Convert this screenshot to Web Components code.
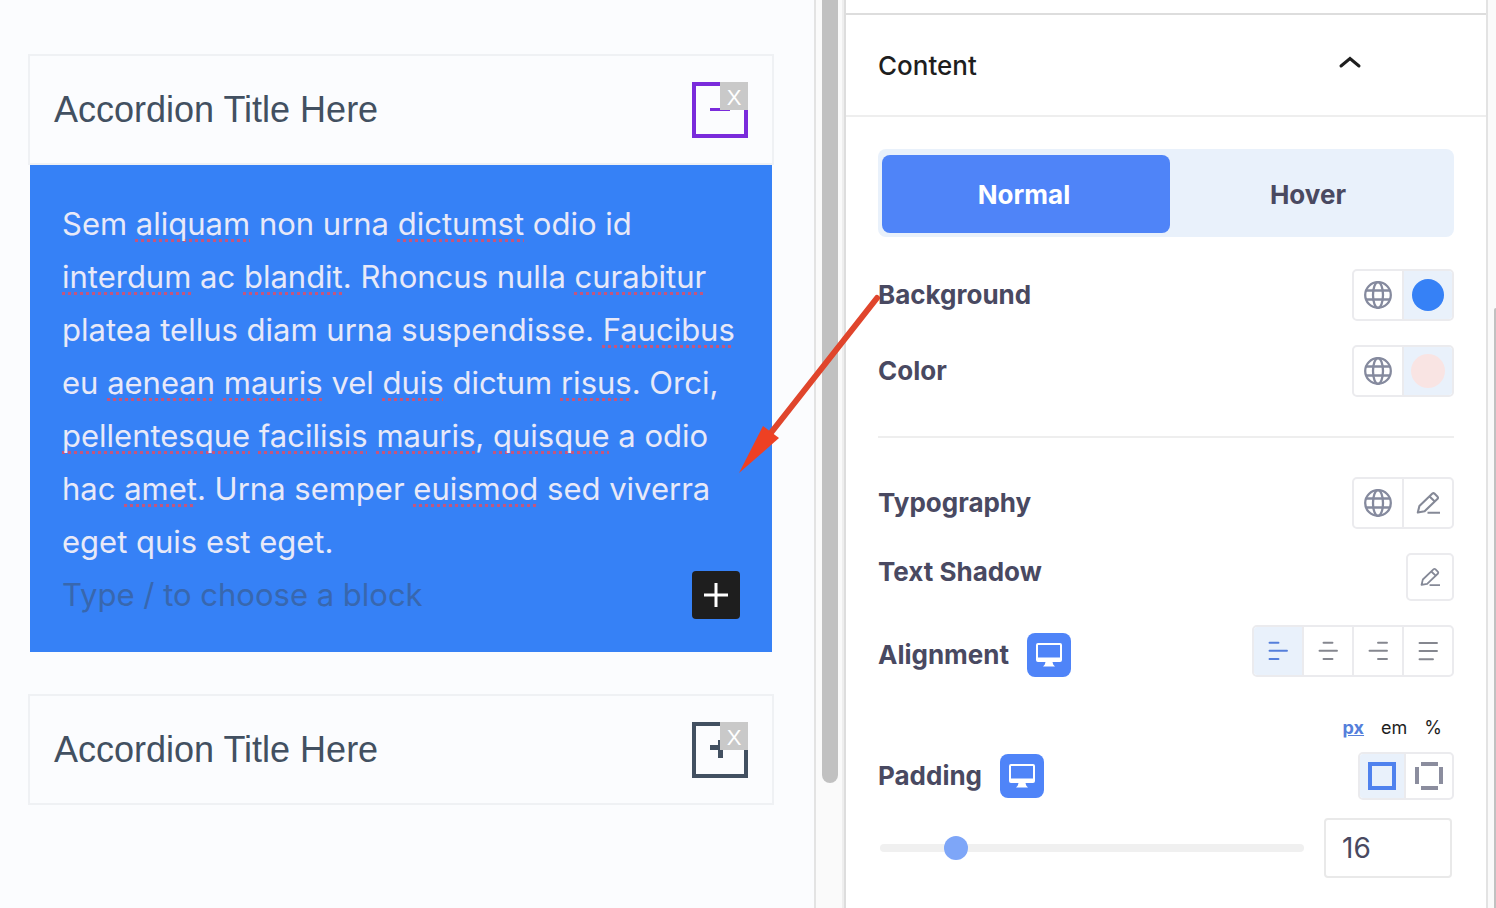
<!DOCTYPE html>
<html lang="en">
<head>
<meta charset="utf-8">
<title>Accordion block settings</title>
<style>
	body { margin: 0; background: #fbfcfe; font-family: Inter, "Liberation Sans", sans-serif; }
	.workspace { display: flex; min-height: 100vh; }
	.workspace editor-canvas { flex: 1; min-width: 0; }
</style>
</head>
<body>
<div class="workspace">
	<editor-canvas>
		<accordion-item heading="Accordion Title Here" open>
			<accordion-text></accordion-text>
		</accordion-item>
		<accordion-item heading="Accordion Title Here"></accordion-item>
	</editor-canvas>
	<scroll-rail></scroll-rail>
	<settings-panel></settings-panel>
</div>
<script>
const icons = {
	globe: [28, 28, `<g fill="none" stroke="#858a9e" stroke-width="2.3"><circle cx="14" cy="14" r="12.8"/><ellipse cx="14" cy="14" rx="5" ry="12.8"/><path d="M2 9.5H26M2 18.5H26"/></g>`],
	pencil: [24, 24, `<g fill="none" stroke="#858997" stroke-width="2.1"><path d="M1.8 21.5L3.4 15L16.4 2.6Q17.4 1.8 18.4 2.6L21.6 5.8Q22.4 6.8 21.6 7.8L8.6 20.2Z" stroke-linejoin="round"/><path d="M13.6 5.4L18.8 10.4M11.5 21.8H24"/></g>`],
	monitor: [26, 24, `<path fill="#fff" fill-rule="evenodd" d="M2 0H24Q26 0 26 2V17Q26 19 24 19H16.5L17.2 21.5L19 23.5H7L8.8 21.5L9.5 19H2Q0 19 0 17V2Q0 0 2 0ZM2 2V14.5H24V2Z"/>`],
	left: [20, 20, `<path fill="none" stroke="currentColor" stroke-width="1.9" stroke-linecap="round" d="M1.5 1.8H10.5M1.5 9.8H19M1.5 18H10.5"/>`],
	center: [20, 20, `<path fill="none" stroke="currentColor" stroke-width="1.9" stroke-linecap="round" d="M5.5 1.8H14.5M1.5 9.8H19M5.5 18H14.5"/>`],
	right: [20, 20, `<path fill="none" stroke="currentColor" stroke-width="1.9" stroke-linecap="round" d="M10 1.8H19M1.5 9.8H19M10 18H19"/>`],
	justify: [20, 20, `<path fill="none" stroke="currentColor" stroke-width="1.9" stroke-linecap="round" d="M1.5 2H19M1.5 10H19M1.5 18.2H15"/>`],
	linked: [28, 28, `<path fill="none" stroke="#4f82ee" stroke-width="4" d="M2 2H26V26H2Z"/>`],
	unlinked: [28, 28, `<path fill="none" stroke="#8b8d9e" stroke-width="4" d="M6 2H23M6 26H23M2 5V22M26 5V22"/>`],
	chevron: [24, 14, `<path fill="none" stroke="#1e1e1e" stroke-width="3" stroke-linecap="round" d="M3 11L12 3.5L21 11"/>`],
	plus: [24, 24, `<path stroke="#fff" stroke-width="3" d="M12 0V24M0 12H24"/>`],
	blue: [32, 32, `<circle cx="16" cy="16" r="16" fill="#3681f6"/>`],
	pink: [34, 34, `<circle cx="17" cy="17" r="17" fill="#f9e4e3"/>`]
};

function attach(element, html){
	element.attachShadow({ mode: "open" }).innerHTML = html;
}

customElements.define("ui-icon",
	class extends HTMLElement {
		connectedCallback(){
			const [width, height, shape] = icons[this.getAttribute("name")];
			const size = this.getAttribute("size") || width;
			attach(this, `
				<style>
					:host { display: block; flex: none; }
					svg { display: block; }
				</style>
				<svg width="${size}" height="${size * height / width}" viewBox="0 0 ${width} ${height}" aria-hidden="true">${shape}</svg>
			`);
		}
	}
);

customElements.define("editor-canvas",
	class extends HTMLElement {
		connectedCallback(){
			attach(this, `
				<style>
					:host { display: flex; flex-direction: column; gap: 40px; box-sizing: border-box; padding: 54px 40px 40px 28px; }
				</style>
				<slot></slot>
			`);
		}
	}
);

customElements.define("accordion-item",
	class extends HTMLElement {
		connectedCallback(){
			const open = this.hasAttribute("open");
			attach(this, `
				<style>
					:host { display: block; }
					header { display: flex; align-items: center; justify-content: space-between; padding: 26px 24px 25px; border: 2px solid #eff1f4; }
					h2 { margin: 0; font: 400 36px/40px "Liberation Sans", sans-serif; color: #425061; }
					.toggle { position: relative; flex: none; width: 56px; height: 56px; }
					.state { display: block; width: 56px; height: 56px; box-sizing: border-box; padding: 14px; border: 4px solid currentColor; background: none; color: ${open ? "#7a2bdb" : "#425061"}; }
					.state svg { display: block; }
					.remove { position: absolute; top: 0; right: 0; width: 28px; height: 28px; padding: 4px 0 0; border: 0; background: #c9c9c9; color: #fff; font: 22px/24px "Liberation Sans", sans-serif; }
					.body { padding: 0 2px 2px; }
				</style>
				<header>
					<h2>${this.getAttribute("heading")}</h2>
					<div class="toggle">
						<button class="state" aria-expanded="${open}" aria-label="Toggle item">
							<svg width="20" height="22" viewBox="0 0 20 22"><path stroke="currentColor" fill="none" stroke-width="${open ? 3 : 5}" d="${open ? "M0 9.5H20" : "M0 7.5H20M10.5 -1V18"}"/></svg>
						</button>
						<button class="remove">X</button>
					</div>
				</header>
				${open ? `<div class="body"><slot></slot></div>` : ""}
			`);
		}
	}
);

customElements.define("accordion-text",
	class extends HTMLElement {
		connectedCallback(){
			attach(this, `
				<style>
					:host { display: block; padding: 32px 32px 31px; background: #3681f6; color: #e8e9f8; font-size: 31px; line-height: 53px; }
					p { margin: 0; white-space: nowrap; }
					u { text-decoration: underline dotted 3px #c3567f; text-decoration-skip-ink: none; text-underline-offset: 4px; }
					.next { display: flex; align-items: center; gap: 16px; height: 53px; }
					input { flex: 1; min-width: 0; height: 53px; padding: 0; border: 0; outline: 0; background: none; font: inherit; }
					input::placeholder { color: #3867ae; opacity: 1; }
					button { display: grid; place-items: center; width: 48px; height: 48px; padding: 0; border: 0; border-radius: 4px; background: #1e1e1e; }
				</style>
				<p>Sem <u>aliquam</u> non urna <u>dictumst</u> odio id<br>
				<u>interdum</u> ac <u>blandit</u>. Rhoncus nulla <u>curabitur</u><br>
				platea tellus diam urna suspendisse. <u>Faucibus</u><br>
				eu <u>aenean</u> <u>mauris</u> vel <u>duis</u> dictum <u>risus</u>. Orci,<br>
				<u>pellentesque</u> <u>facilisis</u> <u>mauris</u>, <u>quisque</u> a odio<br>
				hac <u>amet</u>. Urna semper <u>euismod</u> sed viverra<br>
				eget quis est eget.</p>
				<div class="next">
					<input type="text" placeholder="Type / to choose a block" aria-label="Add block">
					<button aria-label="Add block"><ui-icon name="plus"></ui-icon></button>
				</div>
			`);
		}
	}
);

customElements.define("scroll-rail",
	class extends HTMLElement {
		connectedCallback(){
			attach(this, `
				<style>
					:host { display: flex; padding: 0 4px 0 6px; border-left: 2px solid #e3e3e3; border-right: 2px solid #eee; background: #fafafa; }
					div { width: 16px; height: 783px; border-radius: 0 0 8px 8px; background: #c1c1c1; }
				</style>
				<div></div>
			`);
		}
	}
);

customElements.define("tool-button",
	class extends HTMLElement {
		connectedCallback(){
			const size = this.getAttribute("size");
			attach(this, `
				<style>
					:host { display: block; }
					:host(:not(:first-child)) { border-left: 2px solid #ebebee; }
					button { display: grid; place-items: center; width: 48px; height: 48px; padding: 0; border: 0; background: none; color: #85878f; }
					:host([small]) button { width: 46px; height: 44px; }
					:host([small]:first-child) button { width: 44px; }
					:host([single]) button { width: 44px; height: 44px; }
					:host([active]) button { background: #e9f1fb; color: #557fdb; }
				</style>
				<button aria-label="${this.getAttribute("label")}"><ui-icon name="${this.getAttribute("icon")}" ${size ? `size="${size}"` : ""}></ui-icon></button>
			`);
		}
	}
);

customElements.define("tool-group",
	class extends HTMLElement {
		connectedCallback(){
			attach(this, `
				<style>
					:host { display: flex; flex: none; overflow: hidden; border: 2px solid #ebebee; border-radius: 5px; }
				</style>
				<slot></slot>
			`);
		}
	}
);

customElements.define("control-row",
	class extends HTMLElement {
		connectedCallback(){
			attach(this, `
				<style>
					:host { display: flex; align-items: center; justify-content: space-between; }
					.label { display: flex; align-items: center; gap: 18px; color: #494961; font-size: 26px; font-weight: 700; line-height: 32px; }
					button { display: grid; place-items: center; width: 44px; height: 44px; padding: 0; border: 0; border-radius: 8px; background: #4f84f8; }
					:host([raised]) .label { align-self: flex-start; line-height: 38px; }
					:host([lowered]) { align-items: flex-end; }
				</style>
				<div class="label">${this.getAttribute("label")}${this.hasAttribute("device") ? `<button aria-label="Desktop"><ui-icon name="monitor"></ui-icon></button>` : ""}</div>
				<slot></slot>
			`);
		}
	}
);

customElements.define("state-tabs",
	class extends HTMLElement {
		connectedCallback(){
			attach(this, `
				<style>
					:host { display: flex; padding: 6px 4px 4px; border-radius: 8px; background: #e9f1fb; }
					button { flex: 1; height: 78px; padding: 0 4px 0 0; border: 0; border-radius: 8px; background: none; color: #494961; font: inherit; font-size: 26px; font-weight: 700; }
					.active { flex: 0 0 auto; width: calc(50% + 4px); background: #4f84f8; color: #fff; }
				</style>
				<button class="active" role="tab" aria-selected="true">Normal</button>
				<button role="tab" aria-selected="false">Hover</button>
			`);
		}
	}
);

customElements.define("unit-picker",
	class extends HTMLElement {
		connectedCallback(){
			attach(this, `
				<style>
					:host { display: flex; justify-content: flex-end; gap: 17px; padding-right: 12px; }
					button { padding: 0; border: 0; background: none; color: #1e1e1e; font: inherit; font-size: 18px; line-height: 24px; }
					.active { color: #557fdb; font-weight: 700; text-decoration: underline; text-decoration-skip-ink: auto; }
				</style>
				<button class="active">px</button>
				<button>em</button>
				<button>%</button>
			`);
		}
	}
);

customElements.define("range-field",
	class extends HTMLElement {
		connectedCallback(){
			attach(this, `
				<style>
					:host { display: flex; align-items: center; gap: 20px; padding: 0 2px; }
					.slider { flex: 1; min-width: 0; height: 24px; margin: 0; appearance: none; background: none; }
					.slider::-webkit-slider-runnable-track { height: 8px; border-radius: 4px; background: #f0f0f0; }
					.slider::-webkit-slider-thumb { appearance: none; width: 24px; height: 24px; margin-top: -8px; border-radius: 50%; background: #7ea6f8; }
					.value { box-sizing: border-box; width: 128px; height: 60px; padding: 0 16px; border: 2px solid #e9e9e9; border-radius: 4px; background: #fff; color: #494961; font: inherit; font-size: 28px; }
				</style>
				<input class="slider" type="range" min="0" max="100" value="16" aria-label="Padding">
				<input class="value" type="text" inputmode="numeric" value="16" aria-label="Padding value">
			`);
			this.slider = this.shadowRoot.querySelector(".slider");
			this.field = this.shadowRoot.querySelector(".value");
			this.slider.addEventListener("input", () => this.field.value = this.slider.value);
			this.field.addEventListener("input", () => this.slider.value = this.field.value);
		}
	}
);

customElements.define("pointer-arrow",
	class extends HTMLElement {
		connectedCallback(){
			attach(this, `
				<style>
					:host { display: block; pointer-events: none; }
					svg { display: block; }
				</style>
				<svg width="150" height="190" viewBox="0 0 150 190" aria-hidden="true">
					<path d="M141 8L34 144" stroke="#e0452c" stroke-width="6" stroke-linecap="round"/>
					<path d="M3 183L27 136L43 148Z" fill="#ee4023"/>
				</svg>
			`);
		}
	}
);

customElements.define("settings-panel",
	class extends HTMLElement {
		connectedCallback(){
			attach(this, `
				<style>
					:host { display: flex; position: relative; flex: 0 0 652px; background: #fff; }
					.panel { flex: 1; min-width: 0; border-left: 2px solid #ddd; border-right: 2px solid #e3e3e3; padding-top: 13px; }
					.title { display: flex; align-items: center; justify-content: space-between; width: 100%; height: 104px; padding: 0 124px 0 32px; border: 0; border-top: 2px solid #ddd; border-bottom: 2px solid #eee; background: none; color: #1e1e1e; font: inherit; font-size: 26px; font-weight: 500; }
					.title ui-icon { margin-bottom: 6px; }
					.controls { display: flex; flex-direction: column; gap: 24px; padding: 32px; }
					state-tabs { margin-bottom: 8px; }
					hr { width: 100%; height: 2px; margin: 15px 0; border: 0; background: #eee; }
					.padding { display: flex; flex-direction: column; gap: 12px; margin-top: 15px; }
					range-field { margin-top: 6px; }
					.track { width: 8px; padding-top: 308px; box-sizing: border-box; background: #fafafa; }
					.thumb { height: 600px; margin-left: 6px; border-radius: 8px 0 0; background: #c1c1c1; }
					pointer-arrow { position: absolute; left: -108px; top: 290px; }
				</style>
				<div class="panel">
					<button class="title" aria-expanded="true"><span>Content</span><ui-icon name="chevron"></ui-icon></button>
					<div class="controls">
						<state-tabs role="tablist"></state-tabs>
						<control-row label="Background">
							<tool-group>
								<tool-button icon="globe" label="Global colors"></tool-button>
								<tool-button icon="blue" label="Background color" active></tool-button>
							</tool-group>
						</control-row>
						<control-row label="Color">
							<tool-group>
								<tool-button icon="globe" label="Global colors"></tool-button>
								<tool-button icon="pink" label="Text color" active></tool-button>
							</tool-group>
						</control-row>
						<hr>
						<control-row label="Typography">
							<tool-group>
								<tool-button icon="globe" label="Global fonts"></tool-button>
								<tool-button icon="pencil" label="Edit typography"></tool-button>
							</tool-group>
						</control-row>
						<control-row label="Text Shadow" raised>
							<tool-group>
								<tool-button icon="pencil" size="20" label="Edit text shadow" single></tool-button>
							</tool-group>
						</control-row>
						<control-row label="Alignment" device lowered>
							<tool-group>
								<tool-button icon="left" label="Left" active></tool-button>
								<tool-button icon="center" label="Center"></tool-button>
								<tool-button icon="right" label="Right"></tool-button>
								<tool-button icon="justify" label="Justify"></tool-button>
							</tool-group>
						</control-row>
						<div class="padding">
							<unit-picker></unit-picker>
							<control-row label="Padding" device>
								<tool-group>
									<tool-button icon="linked" label="Linked sides" small active></tool-button>
									<tool-button icon="unlinked" label="Separate sides" small></tool-button>
								</tool-group>
							</control-row>
							<range-field></range-field>
						</div>
					</div>
				</div>
				<div class="track"><div class="thumb"></div></div>
				<pointer-arrow></pointer-arrow>
			`);
		}
	}
);
</script>
</body>
</html>
